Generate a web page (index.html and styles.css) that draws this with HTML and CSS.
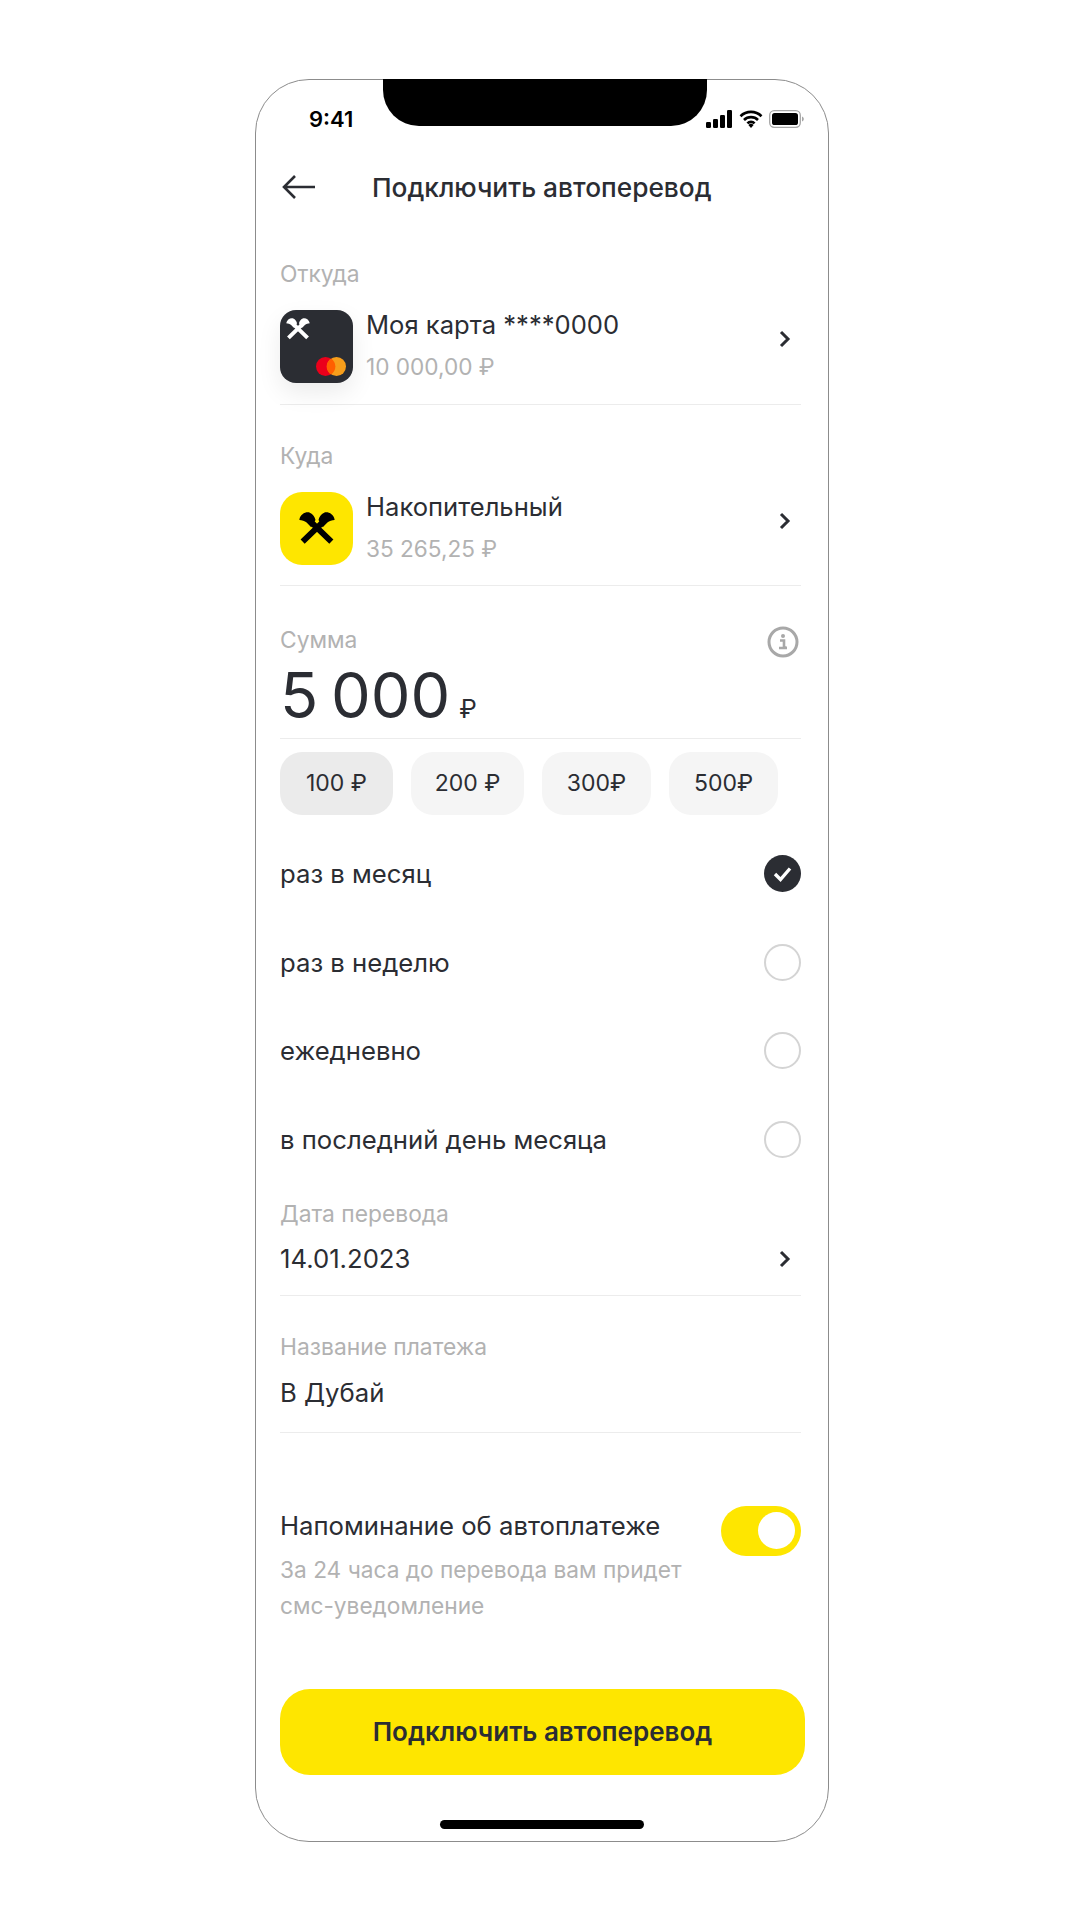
FILE: index.html
```html
<!DOCTYPE html>
<html lang="ru">
<head>
    <meta charset="UTF-8">
    <meta name="viewport" content="width=device-width, initial-scale=1.0">
    <title>Подключить автоперевод</title>
    <link rel="stylesheet" href="styles.css">
</head>
<body>
    <div class="phone">
        <div class="notch"></div>
        <div class="status-bar">
            <span class="time">9:41</span>
            <div class="status-icons">
                <svg width="27" height="18" viewBox="0 0 27 18"><rect x="0" y="12" width="5" height="6" rx="1.2"/><rect x="7" y="9" width="5" height="9" rx="1.2"/><rect x="14" y="5" width="5" height="13" rx="1.2"/><rect x="21" y="0" width="5" height="18" rx="1.2"/></svg>
                <svg width="24" height="18" viewBox="0 0 24 18"><path d="M1.5 6.2a15 15 0 0 1 21 0M5 10a10 10 0 0 1 14 0M8.4 13.4a5 5 0 0 1 7.2 0" fill="none" stroke="#000" stroke-width="2.6"/><path d="M12 18l-2.6-3a3.6 3.6 0 0 1 5.2 0z"/></svg>
                <svg width="35" height="18" viewBox="0 0 35 18"><rect x="0.7" y="0.7" width="30.6" height="16.6" rx="4.5" fill="none" stroke="#a6a6a6" stroke-width="1.3"/><rect x="3" y="3" width="26" height="12" rx="2.6"/><path d="M33 6.5c1.2.4 1.8 1.4 1.8 2.5s-.6 2.1-1.8 2.5z" fill="#a6a6a6"/></svg>
            </div>
        </div>

        <header class="nav">
            <svg class="back" width="34" height="26" viewBox="0 0 34 26"><path d="M33 13H2M13 2L2 13l11 11" fill="none" stroke="#2b2d33" stroke-width="2.6"/></svg>
            <h1>Подключить автоперевод</h1>
        </header>

        <section class="account account-from">
            <div class="label">Откуда</div>
            <div class="account-row">
                <div class="thumb thumb-dark">
                    <svg class="logo-small" width="24" height="22" viewBox="0 0 107 100"><path d="M10 90L72 30M97 90L35 30" stroke="#fff" stroke-width="18" fill="none"/><path d="M0 24C3 6 20-2 32 2 41 6 47 14 49 24L36 46 22 32C16 27 8 25 0 24zM107 24C104 6 87-2 75 2 66 6 60 14 58 24L71 46 85 32C91 27 99 25 107 24z" fill="#fff"/></svg>
                    <svg class="mc" width="30" height="19" viewBox="0 0 30 19"><circle cx="9.500" cy="9.500" r="9.500" fill="#eb001b"/><circle cx="20.500" cy="9.500" r="9.500" fill="#f79e1b"/><path d="M15 1.500a9.500 9.500 0 0 1 0 16 9.500 9.500 0 0 1 0-16z" fill="#ff5f00"/></svg>
                </div>
                <div class="account-text">
                    <div class="account-name">Моя карта ****0000</div>
                    <div class="account-sum">10 000,00 ₽</div>
                </div>
                <svg class="chevron chevron-up" width="12" height="18" viewBox="0 0 12 18"><path d="M2 2l7 7-7 7" fill="none" stroke="#2b2d33" stroke-width="3"/></svg>
            </div>
        </section>

        <section class="account account-to">
            <div class="label">Куда</div>
            <div class="account-row">
                <div class="thumb thumb-yellow">
                    <svg width="36" height="33" viewBox="0 0 107 100"><path d="M10 90L72 30M97 90L35 30" stroke="#000" stroke-width="18" fill="none"/><path d="M0 24C3 6 20-2 32 2 41 6 47 14 49 24L36 46 22 32C16 27 8 25 0 24zM107 24C104 6 87-2 75 2 66 6 60 14 58 24L71 46 85 32C91 27 99 25 107 24z" fill="#000"/></svg>
                </div>
                <div class="account-text">
                    <div class="account-name">Накопительный</div>
                    <div class="account-sum">35 265,25 ₽</div>
                </div>
                <svg class="chevron chevron-up" width="12" height="18" viewBox="0 0 12 18"><path d="M2 2l7 7-7 7" fill="none" stroke="#2b2d33" stroke-width="3"/></svg>
            </div>
        </section>

        <section class="amount">
            <div class="amount-head">
                <div class="label">Сумма</div>
                <svg class="info" width="32" height="32" viewBox="0 0 32 32"><circle cx="16" cy="16" r="14" fill="none" stroke="#a8a8a8" stroke-width="3"/><circle cx="16" cy="10" r="2" fill="#a8a8a8"/><path d="M13 14.500h4v7h2.500M12 22h8" fill="none" stroke="#a8a8a8" stroke-width="2.600"/></svg>
            </div>
            <div class="amount-value">5 000<span class="amount-cur">₽</span></div>
        </section>

        <div class="chips">
            <span class="chip chip-active chip-wide">100 ₽</span>
            <span class="chip chip-wide">200 ₽</span>
            <span class="chip">300₽</span>
            <span class="chip">500₽</span>
        </div>

        <div class="options">
            <div class="option">
                <span>раз в месяц</span>
                <svg class="radio" width="37" height="37" viewBox="0 0 37 37"><circle cx="18.500" cy="18.500" r="18.500" fill="#2b2d33"/><path d="M11 19l5.500 5.500 9.500-11" fill="none" stroke="#fff" stroke-width="3.400"/></svg>
            </div>
            <div class="option"><span>раз в неделю</span><span class="radio-empty"></span></div>
            <div class="option"><span>ежедневно</span><span class="radio-empty"></span></div>
            <div class="option"><span>в последний день месяца</span><span class="radio-empty"></span></div>
        </div>

        <section class="field field-date">
            <div class="label">Дата перевода</div>
            <div class="field-row">
                <span>14.01.2023</span>
                <svg class="chevron" width="12" height="18" viewBox="0 0 12 18"><path d="M2 2l7 7-7 7" fill="none" stroke="#2b2d33" stroke-width="3"/></svg>
            </div>
        </section>

        <section class="field field-name">
            <div class="label">Название платежа</div>
            <div class="field-row"><span>В Дубай</span></div>
        </section>

        <section class="reminder">
            <div class="reminder-text">
                <div class="reminder-title">Напоминание об автоплатеже</div>
                <div class="reminder-note">За 24 часа до перевода вам придет<br>смс-уведомление</div>
            </div>
            <div class="toggle"><span class="toggle-knob"></span></div>
        </section>

        <button class="submit">Подключить автоперевод</button>
        <div class="home-bar"></div>
    </div>
</body>
</html>
```

FILE: styles.css
```css
* {
    box-sizing: border-box;
}
body {
    margin: 0;
    background: #fff;
    font-family: Inter, "Noto Sans", sans-serif;
    color: #2b2d33;
}
.phone {
    position: relative;
    width: 574px;
    height: 1763px;
    margin: 79px 0 0 255px;
    padding: 0 27px 0 24px;
    border: 1.5px solid #8c8c8c;
    border-radius: 54px;
    background: #fff;
}
.notch {
    position: absolute;
    top: -1px;
    left: 127px;
    width: 324px;
    height: 47px;
    background: #000;
    border-radius: 0 0 36px 36px;
}
.status-bar {
    display: flex;
    justify-content: space-between;
    align-items: center;
    height: 32px;
    margin-top: 23px;
    padding: 0 0 0 29px;
}
.time {
    font-size: 22px;
    font-weight: 600;
    color: #000;
}
.status-icons {
    display: flex;
    align-items: center;
    gap: 6px;
    margin-right: -3px;
}
.nav {
    display: flex;
    align-items: center;
    height: 40px;
    margin-top: 32px;
}
.back {
    flex: none;
    margin-left: 2px;
}
.nav h1 {
    margin: 0 0 0 56px;
    font-size: 26.300px;
    font-weight: 500;
}
.label {
    font-size: 22.800px;
    line-height: 26px;
    color: #b2b2b2;
}
.account {
    border-bottom: 1.5px solid #ececec;
}
.account-from {
    margin-top: 54px;
    height: 144px;
}
.account-to {
    margin-top: 38px;
    height: 143px;
}
.account-row {
    display: flex;
    align-items: center;
    margin-top: 23px;
}
.thumb {
    position: relative;
    flex: none;
    display: flex;
    align-items: center;
    justify-content: center;
    width: 73px;
    height: 73px;
    border-radius: 16px;
}
.thumb-dark {
    background: #2b2d33;
    box-shadow: 0 10px 24px rgba(0, 0, 0, 0.08);
}
.thumb-yellow {
    background: #fee600;
    border-radius: 22px;
}
.logo-small {
    position: absolute;
    top: 8px;
    left: 6px;
}
.mc {
    position: absolute;
    right: 7px;
    bottom: 7px;
}
.account-text {
    flex: 1;
    margin-left: 13px;
}
.account-name {
    font-size: 25.600px;
    line-height: 30px;
    margin-top: -4px;
}
.account-sum {
    margin-top: 14px;
    font-size: 22.600px;
    line-height: 26px;
    color: #b2b2b2;
}
.chevron {
    flex: none;
    margin-right: 10px;
}
.chevron-up {
    margin-top: -15px;
}
.amount {
    height: 115px;
    margin-top: 38px;
    border-bottom: 1.5px solid #ececec;
}
.amount-head {
    display: flex;
    justify-content: space-between;
    align-items: center;
}
.info {
    margin: 2px 2px -2px 0;
}
.amount-value {
    font-size: 63px;
    line-height: 76px;
    margin-top: 1px;
    word-spacing: -5px;
}
.amount-cur {
    margin-left: 9px;
    font-size: 25px;
}
.chips {
    display: flex;
    gap: 18px;
    margin-top: 13px;
}
.chip {
    display: flex;
    align-items: center;
    justify-content: center;
    width: 109px;
    height: 63px;
    padding-bottom: 2px;
    border-radius: 22px;
    background: #f5f5f5;
    font-size: 23px;
}
.chip-wide {
    width: 113px;
}
.chip-active {
    background: #ebebeb;
}
.options {
    margin-top: 14px;
}
.option {
    display: flex;
    justify-content: space-between;
    align-items: center;
    height: 88.700px;
    font-size: 25.700px;
}
.radio-empty {
    width: 37px;
    height: 37px;
    border: 2.500px solid #d4d4d4;
    border-radius: 50%;
}
.field {
    border-bottom: 1.500px solid #ececec;
}
.field-date {
    margin-top: 17px;
    height: 95px;
}
.field-name {
    margin-top: 38px;
    height: 99px;
}
.field-row {
    display: flex;
    justify-content: space-between;
    align-items: center;
    margin-top: 17.500px;
    font-size: 25.700px;
    line-height: 30px;
}
.field-name .field-row {
    margin-top: 18.500px;
}
.reminder {
    display: flex;
    justify-content: space-between;
    margin-top: 78px;
}
.reminder-title {
    font-size: 25.700px;
    line-height: 30px;
}
.reminder-note {
    margin-top: 11px;
    font-size: 22.700px;
    line-height: 36px;
    color: #b2b2b2;
}
.toggle {
    flex: none;
    display: flex;
    justify-content: flex-end;
    align-items: center;
    width: 80px;
    height: 50px;
    margin-top: -5px;
    padding-right: 6px;
    border-radius: 25px;
    background: #fee600;
}
.toggle-knob {
    width: 37px;
    height: 37px;
    border-radius: 50%;
    background: #fff;
}
.submit {
    display: block;
    width: 525px;
    height: 86px;
    margin-top: 65px;
    border: none;
    border-radius: 30px;
    background: #fee600;
    color: #2b2d33;
    font-family: inherit;
    font-size: 26px;
    font-weight: 600;
}
.home-bar {
    position: absolute;
    left: 184px;
    bottom: 12px;
    width: 204px;
    height: 9px;
    border-radius: 5px;
    background: #000;
}
```
